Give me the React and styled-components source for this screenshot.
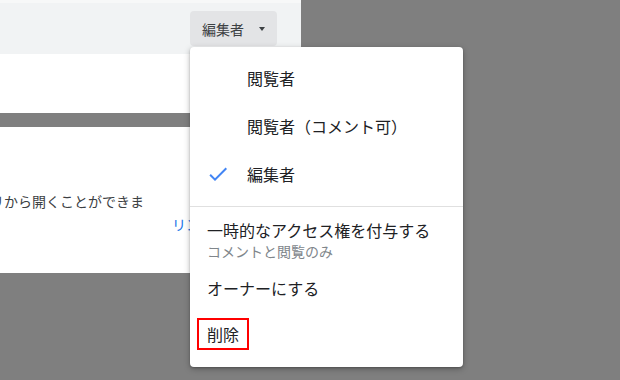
import React from "react";
import styled, { createGlobalStyle } from "styled-components";

const GlobalStyle = createGlobalStyle`
  html, body {
    margin: 0;
    padding: 0;
    background: #7f7f7f;
  }
  body {
    font-family: "Noto Sans CJK JP", "Noto Sans", "Liberation Sans", sans-serif;
    -webkit-font-smoothing: antialiased;
  }
`;

const Page = styled.div`
  position: relative;
  width: 620px;
  height: 380px;
  overflow: hidden;
  background: #7f7f7f;
`;

const Column = styled.div`
  width: 301px;
  display: flex;
  flex-direction: column;
  gap: 14px;
`;

const HeaderPanel = styled.div`
  height: 113px;
  background: #fff;
`;

const Toolbar = styled.div`
  height: 54px;
  box-sizing: border-box;
  background: #f1f3f4;
  border-top: 3px solid #f7f8f8;
  display: flex;
  justify-content: flex-end;
  align-items: flex-start;
  padding: 8px 24px 0 0;
`;

const RoleButton = styled.div`
  width: 87px;
  height: 35px;
  box-sizing: border-box;
  border-radius: 4px;
  background: #e3e4e6;
  display: flex;
  align-items: center;
  padding-left: 12px;
  font-size: 14px;
  line-height: 20px;
  color: #3c4043;
`;

const Caret = styled.span`
  margin-left: 15px;
  width: 0;
  height: 0;
  border-left: 3.5px solid transparent;
  border-right: 3.5px solid transparent;
  border-top: 4px solid #3c4043;
`;

const InfoPanel = styled.div`
  height: 146px;
  background: #fff;
  overflow: hidden;
  padding-top: 64px;
  box-sizing: border-box;
`;

const InfoText = styled.div`
  font-size: 14px;
  line-height: 20px;
  color: #3c4043;
  white-space: nowrap;
  margin-left: -24px;
`;

const LinkText = styled.div`
  font-size: 14px;
  line-height: 20px;
  color: #1a73e8;
  white-space: nowrap;
  margin-top: 3px;
  padding-left: 172px;
`;

const Menu = styled.div`
  position: absolute;
  left: 190px;
  top: 47px;
  width: 273px;
  box-sizing: border-box;
  padding: 7px 0 9px;
  background: #fff;
  border-radius: 4px;
  box-shadow: 0 2px 6px rgba(0, 0, 0, 0.28), 0 1px 2px rgba(0, 0, 0, 0.2);
`;

const RoleItem = styled.div`
  height: 48px;
  display: flex;
  align-items: center;
  padding-left: 16px;
  font-size: 16px;
  line-height: 20px;
  color: #202124;
`;

const CheckSlot = styled.span`
  width: 24px;
  height: 24px;
  margin-right: 17px;
  display: flex;
  color: #4285f4;
`;

const Divider = styled.div`
  height: 1px;
  background: #e0e0e0;
  margin: 8px 0;
`;

const ActionItem = styled.div`
  display: flex;
  flex-direction: column;
  justify-content: center;
  height: ${(p) => p.h}px;
  padding-left: ${(p) => p.pl || 17}px;
  box-sizing: border-box;
  font-size: 16px;
  line-height: 20px;
  color: #202124;
`;

const TwoLineItem = styled.div`
  padding: 5px 0 6px 17px;
  display: flex;
  flex-direction: column;
`;

const Title = styled.div`
  font-size: 16px;
  line-height: 20px;
  color: #202124;
`;

const Sub = styled.div`
  margin-top: 2px;
  font-size: 14px;
  line-height: 18px;
  color: #80868b;
`;

const Flagged = styled.span`
  align-self: flex-start;
  border: 2px solid #ff0000;
  padding: 4px 8px;
`;

const Check = () => (
  <svg width="24" height="24" viewBox="0 0 24 24" fill="currentColor">
    <path d="M9 16.17L4.83 12l-1.42 1.41L9 19 21 7l-1.41-1.41z" />
  </svg>
);

const roles = [
  { label: "閲覧者", checked: false },
  { label: "閲覧者（コメント可）", checked: false },
  { label: "編集者", checked: true },
];

export default function App() {
  return (
    <>
      <GlobalStyle />
      <Page>
        <Column>
          <HeaderPanel>
            <Toolbar>
              <RoleButton>
                編集者
                <Caret />
              </RoleButton>
            </Toolbar>
          </HeaderPanel>
          <InfoPanel>
            <InfoText>プリから開くことができま</InfoText>
            <LinkText>リンクをコピー</LinkText>
          </InfoPanel>
        </Column>

        <Menu>
          {roles.map((r) => (
            <RoleItem key={r.label}>
              <CheckSlot>{r.checked && <Check />}</CheckSlot>
              {r.label}
            </RoleItem>
          ))}
          <Divider />
          <TwoLineItem>
            <Title>一時的なアクセス権を付与する</Title>
            <Sub>コメントと閲覧のみ</Sub>
          </TwoLineItem>
          <ActionItem h={44}>オーナーにする</ActionItem>
          <ActionItem h={48} pl={7}>
            <Flagged>削除</Flagged>
          </ActionItem>
        </Menu>
      </Page>
    </>
  );
}
